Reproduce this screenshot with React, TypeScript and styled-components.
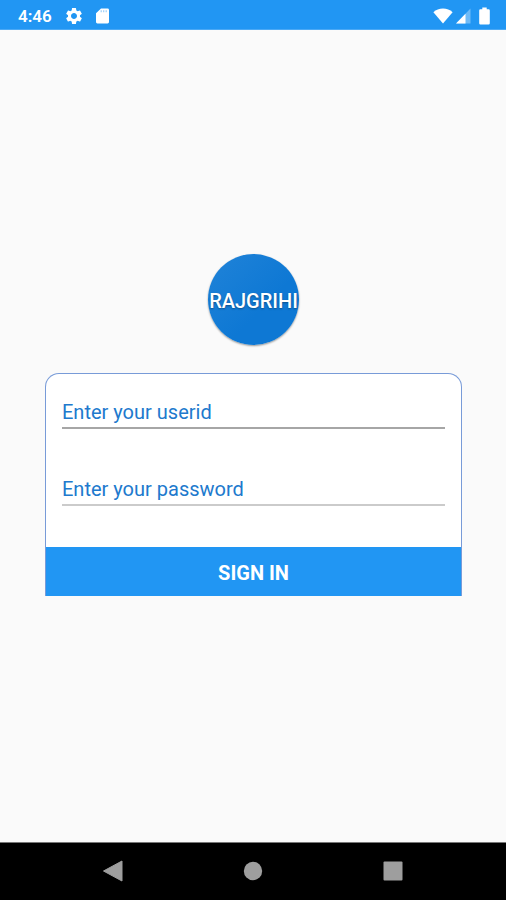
import React from "react";
import styled, { createGlobalStyle } from "styled-components";
import { MdSettings } from "react-icons/md";

const GlobalStyle = createGlobalStyle`
  *, *::before, *::after { box-sizing: border-box; }
  body {
    margin: 0;
    background: #fafafa;
    font-family: Roboto, "Liberation Sans", sans-serif;
  }
`;

const Screen = styled.div`
  display: flex;
  flex-direction: column;
  min-height: 100vh;
`;

const StatusBar = styled.header`
  display: flex;
  align-items: center;
  justify-content: space-between;
  height: 30px;
  padding: 2px 16px 0 18px;
  background: #2196f3;
  border-bottom: 1px solid #4ba9f5;
  color: #fff;
`;

const StatusGroup = styled.div<{ $gap: number }>`
  display: flex;
  align-items: center;
  gap: ${({ $gap }) => $gap}px;

  svg {
    display: block;
  }
`;

const Clock = styled.time`
  font-size: 17px;
  line-height: 20px;
  font-weight: 600;
`;

const Main = styled.main`
  flex: 1;
  display: flex;
  flex-direction: column;
  align-items: center;
  justify-content: center;
  gap: 28px;
  padding: 0 44px 22px 45px;
`;

const Logo = styled.div`
  display: flex;
  align-items: center;
  justify-content: center;
  width: 91px;
  height: 91px;
  padding-top: 2px;
  border-radius: 50%;
  background: linear-gradient(135deg, #2083d8, #0e78d4 60%);
  box-shadow: 0 1px 2px rgba(0, 0, 0, 0.4);
  color: #fff;
  font-size: 20px;
  line-height: 24px;
  font-weight: 500;
  text-shadow: 0 1px 2px rgba(0, 0, 0, 0.35);
`;

const Card = styled.form`
  width: 100%;
  background: #fff;
  border: 1px solid #789bd8;
  border-bottom: 0;
  border-radius: 14px 14px 0 0;
`;

const Fields = styled.div`
  display: flex;
  flex-direction: column;
  gap: 40px;
  padding: 18px 16px 41px;
`;

const Field = styled.input<{ $line: string }>`
  display: block;
  width: 100%;
  height: 37px;
  padding: 5px 0 0;
  border: 0;
  border-bottom: 2px solid ${({ $line }) => $line};
  border-radius: 0;
  outline: 0;
  background: transparent;
  color: #1976d2;
  font: 400 20px/24px Roboto, "Liberation Sans", sans-serif;

  &::placeholder {
    color: #2079cd;
    opacity: 1;
  }
`;

const SignInButton = styled.button`
  display: block;
  width: 100%;
  height: 49px;
  padding: 3px 0 0;
  border: 0;
  background: #2196f3;
  color: #fff;
  font: 700 20px/24px Roboto, "Liberation Sans", sans-serif;
  cursor: pointer;
`;

const NavBar = styled.nav`
  display: flex;
  align-items: center;
  justify-content: center;
  gap: 116px;
  height: 58px;
  padding-bottom: 2px;
  border-top: 1px solid #777;
  background: #000;
`;

const NavButton = styled.button`
  width: 24px;
  height: 24px;
  padding: 0;
  border: 0;
  background: none;
  color: #9e9e9e;
  cursor: pointer;

  svg {
    display: block;
  }
`;

const SdCardIcon = () => (
  <svg width="14" height="16" viewBox="0 0 14 16" aria-hidden="true">
    <path
      d="M5 0.5h6.6a1.4 1.4 0 0 1 1.4 1.4v12.2a1.4 1.4 0 0 1-1.4 1.4H1.4A1.4 1.4 0 0 1 0 14.1V5.3z"
      fill="#fff"
    />
    <path d="M5.2 2.2v2M7.7 2.2v2M10.2 2.2v2" stroke="#9dcff8" strokeWidth="1.2" />
  </svg>
);

const WifiIcon = () => (
  <svg width="20" height="16" viewBox="0 0 20 16" aria-hidden="true">
    <path d="M10 15.5 0.4 4.2C3 1.8 6.3 0.5 10 0.5S17 1.8 19.6 4.2z" fill="#fff" />
  </svg>
);

const SignalIcon = () => (
  <svg width="15" height="16" viewBox="0 0 15 16" aria-hidden="true">
    <path d="M0 15.5 14.5 0.5v15z" fill="#fff" opacity="0.35" />
    <path d="M0 15.5 9.5 5.7v9.8z" fill="#fff" />
  </svg>
);

const BatteryIcon = () => (
  <svg width="11" height="18" viewBox="0 0 11 18" aria-hidden="true">
    <path
      d="M3.3 0.5h4.4v1.8h1.9q1.2 0 1.2 1.2v12.8q0 1.2-1.2 1.2H1.4q-1.2 0-1.2-1.2V3.5q0-1.2 1.2-1.2h1.9z"
      fill="#fff"
    />
  </svg>
);

export default function App() {
  return (
    <>
      <GlobalStyle />
      <Screen>
        <StatusBar>
          <StatusGroup $gap={12}>
            <Clock>4:46</Clock>
            <MdSettings size={20} aria-hidden="true" />
            <SdCardIcon />
          </StatusGroup>
          <StatusGroup $gap={8}>
            <StatusGroup $gap={3}>
              <WifiIcon />
              <SignalIcon />
            </StatusGroup>
            <BatteryIcon />
          </StatusGroup>
        </StatusBar>
        <Main>
          <Logo>RAJGRIHI</Logo>
          <Card onSubmit={(e: React.FormEvent) => e.preventDefault()}>
            <Fields>
              <Field $line="#a6a6a6" type="text" placeholder="Enter your userid" aria-label="Enter your userid" />
              <Field $line="#cbcbcb" type="password" placeholder="Enter your password" aria-label="Enter your password" />
            </Fields>
            <SignInButton type="submit">SIGN IN</SignInButton>
          </Card>
        </Main>
        <NavBar aria-label="System navigation">
          <NavButton type="button" aria-label="Back">
            <svg width="24" height="24" viewBox="0 0 24 24" aria-hidden="true">
              <path d="M21 2v20L2.5 12z" fill="currentColor" stroke="currentColor" strokeLinejoin="round" />
            </svg>
          </NavButton>
          <NavButton type="button" aria-label="Home">
            <svg width="24" height="24" viewBox="0 0 24 24" aria-hidden="true">
              <circle cx="12" cy="12" r="9.2" fill="currentColor" />
            </svg>
          </NavButton>
          <NavButton type="button" aria-label="Recent apps">
            <svg width="24" height="24" viewBox="0 0 24 24" aria-hidden="true">
              <rect x="2.5" y="2.5" width="19" height="19" rx="1" fill="currentColor" />
            </svg>
          </NavButton>
        </NavBar>
      </Screen>
    </>
  );
}
